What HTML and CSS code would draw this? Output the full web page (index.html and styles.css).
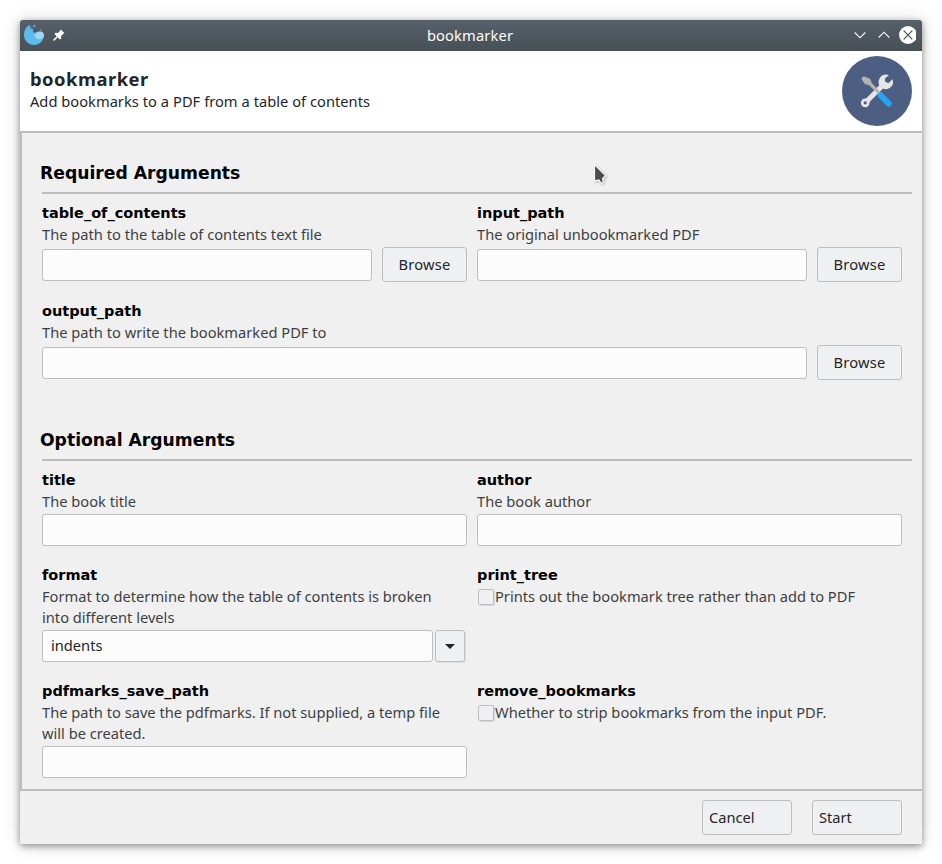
FILE: index.html
```html
<!DOCTYPE html>
<html lang="en">
<head>
<meta charset="utf-8">
<title>bookmarker</title>
<link rel="stylesheet" href="styles.css">
</head>
<body>
<div class="window">
  <div class="titlebar">
    <svg class="app-icon" width="22" height="22" viewBox="0 0 22 22">
      <path d="M5 2 C6 1 7 1 7.3 2 V4.5 C7.8 6 9 4 9.8 5 C10.6 6 9.4 8 11 8.5 C13 9 14 6.5 21 9.5 C22 15 17.5 21 11 21 C5.5 21 1 16.5 1 11 C1 7 2.7 3.8 5 2Z" fill="#5bbcec"/>
      <path d="M11 10.5 C13 11 14 7 17 7.2 C20 7.4 21 9.5 20.8 12.3 C18.5 16.4 12 16.5 11 10.5Z" fill="#a0d6f4"/>
      <circle cx="11.3" cy="2" r="1.3" fill="#42afe3"/><circle cx="17.8" cy="5.7" r=".8" fill="#6fa6c0"/><circle cx="8.7" cy="4" r=".7" fill="#42afe3"/>
    </svg>
    <svg class="pin" width="12" height="12" viewBox="0 0 12 12">
      <path d="M7.8 .5 L11.5 4.2 L10.3 4.7 L8 7.2 L8.2 9.4 L7 10.5 L1.5 5 L2.6 3.8 L4.8 4 L7.2 1.7Z" fill="#fff"/>
      <path d="M4.2 7.8 L.6 11.4" stroke="#fff" stroke-width="1.5"/>
    </svg>
    <div class="window-title">bookmarker</div>
    <svg class="controls" width="62" height="20" viewBox="0 0 62 20" fill="none">
      <path d="M.7 7.5 L6 12.8 L11.3 7.5 M24.7 12.5 L30 7.2 L35.3 12.5" stroke="#fcfcfc" stroke-width="1.1"/>
      <circle cx="54" cy="10" r="9" fill="#fcfcfc"/>
      <path d="M49.7 5.7 L58.3 14.3 M58.3 5.7 L49.7 14.3" stroke="#475057" stroke-width="1.2"/>
    </svg>
  </div>
  <header class="header">
    <div>
      <h1 class="app-name">bookmarker</h1>
      <p class="tagline">Add bookmarks to a PDF from a table of contents</p>
    </div>
    <svg class="badge" width="70" height="70" viewBox="0 0 70 70">
      <circle cx="35" cy="35" r="35" fill="#4c5f82"/>
      <path d="M25 45 L43 27" stroke="#e6e6e6" stroke-width="5"/>
      <circle cx="23.2" cy="46.8" r="3" fill="none" stroke="#e6e6e6" stroke-width="2.7"/>
      <path d="M47 19.3 A7.3 7.3 0 1 0 50.6 23.2 L46.2 27.2 L42.8 25.2 L43 22.2Z" fill="#e6e6e6"/>
      <path d="M19.2 22.5 L21.8 20.3 L28 22.8 L30 27.2 L39 36.7 L36.8 38.7 L27.2 29.3 L22.8 28Z" fill="#b3b3b3"/>
      <path d="M38.8 39.5 L46.8 47.7" stroke="#24a5f3" stroke-width="6" stroke-linecap="round"/>
      <path d="M36 39.3 L39.3 36 L42.5 39.3 L39.3 42.5Z" fill="#24a5f3"/>
    </svg>
  </header>
  <main class="form">
    <section class="group">
      <h2 class="group-title">Required Arguments</h2>
      <div class="fields">
        <div class="field">
          <h3 class="label">table_of_contents</h3>
          <p class="help">The path to the table of contents text file</p>
          <div class="file"><div class="input"></div><div class="button browse">Browse</div></div>
        </div>
        <div class="field">
          <h3 class="label">input_path</h3>
          <p class="help">The original unbookmarked PDF</p>
          <div class="file"><div class="input"></div><div class="button browse">Browse</div></div>
        </div>
        <div class="field wide">
          <h3 class="label">output_path</h3>
          <p class="help">The path to write the bookmarked PDF to</p>
          <div class="file"><div class="input"></div><div class="button browse">Browse</div></div>
        </div>
      </div>
    </section>
    <section class="group optional">
      <h2 class="group-title">Optional Arguments</h2>
      <div class="fields">
        <div class="field">
          <h3 class="label">title</h3>
          <p class="help">The book title</p>
          <div class="input"></div>
        </div>
        <div class="field">
          <h3 class="label">author</h3>
          <p class="help">The book author</p>
          <div class="input"></div>
        </div>
        <div class="field">
          <h3 class="label">format</h3>
          <p class="help">Format to determine how the table of contents is broken<br>into different levels</p>
          <div class="select">
            <div class="input">indents</div>
            <div class="button arrow"><svg width="10" height="5" viewBox="0 0 10 5"><path d="M0 0H10L5 5Z" fill="#232629"/></svg></div>
          </div>
        </div>
        <div class="field">
          <h3 class="label">print_tree</h3>
          <div class="check"><span class="box"></span><span class="help">Prints out the bookmark tree rather than add to PDF</span></div>
        </div>
        <div class="field">
          <h3 class="label">pdfmarks_save_path</h3>
          <p class="help">The path to save the pdfmarks. If not supplied, a temp file<br>will be created.</p>
          <div class="input"></div>
        </div>
        <div class="field">
          <h3 class="label">remove_bookmarks</h3>
          <div class="check"><span class="box"></span><span class="help">Whether to strip bookmarks from the input PDF.</span></div>
        </div>
      </div>
    </section>
  </main>
  <footer class="footer">
    <div class="button action">Cancel</div>
    <div class="button action">Start</div>
  </footer>
</div>
<svg class="cursor" width="16" height="24" viewBox="0 0 16 24">
  <path d="M1.5 1.5 V18 L5.8 17 L8.3 20.3 L10.2 19.5 L9.6 15.5 L12.5 12.7Z" fill="#4b4b4b" stroke="#fff" stroke-width="1.2"/>
</svg>
</body>
</html>
```
FILE: styles.css
```css
* { box-sizing: border-box; }
body {
  margin: 0;
  padding: 20px;
  height: 864px;
  overflow: hidden;
  background: #fff;
  color: #232629;
  font: 14.67px/21px "Noto Sans", sans-serif;
}
h1, h2, h3, p { margin: 0; }
.window {
  display: flex;
  flex-direction: column;
  width: 902px;
  height: 824px;
  background: #f0f0f0;
  border-radius: 3px 3px 0 0;
  box-shadow: 0 2px 7px rgba(0, 0, 0, .42), 0 1px 20px rgba(0, 0, 0, .14);
}
.titlebar {
  display: flex;
  align-items: center;
  height: 31px;
  padding: 0 6px 1px 3px;
  border-radius: 3px 3px 0 0;
  background: linear-gradient(#566068, #475057);
  color: #fcfcfc;
}
.pin { margin-left: 8px; }
.window-title { flex: 1; text-align: center; padding-left: 21px; letter-spacing: .15px; }
.header {
  display: flex;
  justify-content: space-between;
  height: 80px;
  padding: 5px 10px 0;
  background: #fff;
}
.app-name { margin-top: 9px; font-size: 18.4px; line-height: 26px; letter-spacing: .5px; padding-top: 1px; height: 26px; }
.tagline { word-spacing: .15px; }
.form {
  height: 660px;
  border: solid #bdbdbd;
  border-width: 2px 0 2px 2px;
  padding: 26px 10px 0 20px;
}
.group-title {
  height: 35px;
  margin: 0 0 -2px -2px;
  font: bold 17.2px/29px "DejaVu Sans", sans-serif;
  color: #000;
}
.fields {
  display: grid;
  grid-template-columns: 425px 425px;
  column-gap: 10px;
  row-gap: 18px;
  padding-top: 8px;
  position: relative;
  border-top: 2px solid #bdbdbd;
}
.optional { margin-top: 46px; }
.wide { grid-column: 1 / 3; }
.label {
  height: 22px;
  font: bold 14.5px/22px "DejaVu Sans", sans-serif;
  color: #000;
}
.help { color: #3c3f42; margin-bottom: 2px; white-space: nowrap; }
.input {
  height: 32px;
  padding: 0 8px;
  line-height: 29px;
  background: #fcfcfc;
  border: 1px solid #bcbebf;
  border-radius: 3px;
}
.file { display: flex; align-items: center; gap: 10px; height: 35px; }
.file .input { flex: 1; margin-top: 1px; }
.button {
  height: 35px;
  line-height: 33px;
  background: #eff0f2;
  border: 1px solid #bcbebf;
  border-radius: 3px;
}
.browse { width: 85px; text-align: center; letter-spacing: .2px; }
.select { display: flex; gap: 2px; }
.select .input { width: 391px; }
.arrow {
  display: flex;
  align-items: center;
  justify-content: center;
  width: 30px;
  height: 32px;
  box-shadow: 1px 1px 0 rgba(0, 0, 0, .08);
}
.check { display: flex; align-items: center; height: 21px; padding-left: 1px; }
.check .help { margin: 0; }
.box {
  width: 16px;
  height: 16px;
  margin-right: 1px;
  background: #eff0f2;
  border: 1px solid #bcbebf;
  border-radius: 2px;
  box-shadow: 1px 1px 0 rgba(0, 0, 0, .1);
}
.footer { display: flex; justify-content: flex-end; gap: 20px; padding: 9px 20px 0; }
.action { width: 90px; padding-left: 6px; }
.cursor { position: absolute; left: 593px; top: 163px; filter: drop-shadow(1px 1px 1px rgba(0, 0, 0, .25)); }
```
